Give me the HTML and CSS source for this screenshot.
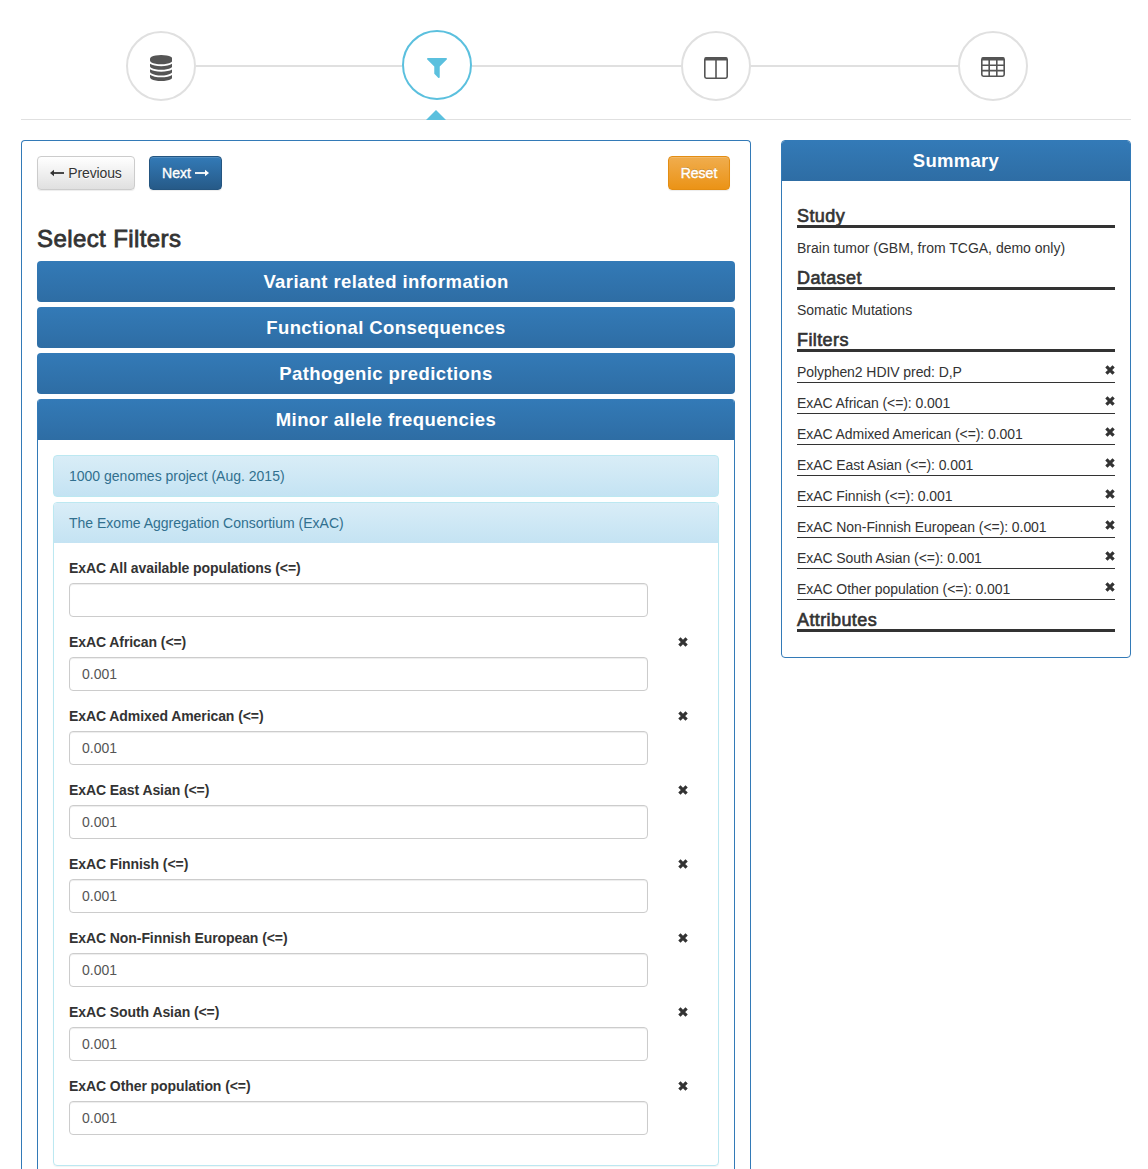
FILE: index.html
```html
<!DOCTYPE html>
<html lang="en">
<head>
<meta charset="utf-8">
<title>Select Filters</title>
<link rel="stylesheet" href="styles.css">
</head>
<body>
<svg width="0" height="0" class="defs" aria-hidden="true">
  <symbol id="remove" viewBox="0 0 10 10"><path d="M1.4 1.4L8.6 8.6M8.6 1.4L1.4 8.6" stroke="#333" stroke-width="3.2"/></symbol>
</svg>
<nav class="steps">
  <span class="step"><svg width="22.3" height="26" viewBox="0 0 1536 1792" fill="#555"><path d="M768 768q237 0 443-43t325-127v170q0 69-103 128t-280 93.5-385 34.5-385-34.5-280-93.5-103-128v-170q119 84 325 127t443 43zm0 768q237 0 443-43t325-127v170q0 69-103 128t-280 93.5-385 34.5-385-34.5-280-93.5-103-128v-170q119 84 325 127t443 43zm0-384q237 0 443-43t325-127v170q0 69-103 128t-280 93.5-385 34.5-385-34.5-280-93.5-103-128v-170q119 84 325 127t443 43zm0-1152q208 0 385 34.5t280 93.5 103 128v128q0 69-103 128t-280 93.5-385 34.5-385-34.5-280-93.5-103-128v-128q0-69 103-128t280-93.5 385-34.5z"/></svg></span>
  <span class="line line-first"></span>
  <span class="step active"><svg width="20" height="20" viewBox="192 256 1408 1408" fill="#5bc0de"><path d="M1595 295q17 41-14 70l-493 493v742q0 42-39 59-13 5-25 5-27 0-45-19l-256-256q-19-19-19-45v-486l-493-493q-31-29-14-70 17-39 59-39h1280q42 0 59 39z"/></svg></span>
  <span class="line line-second"></span>
  <span class="step"><svg width="24" height="22" viewBox="0 0 24 22" fill="none" stroke="#555"><rect x=".8" y=".8" width="22.4" height="20.4" rx="1.6" stroke-width="1.6"/><path d="M1 2H23" stroke-width="3"/><path d="M12 2V21" stroke-width="1.6"/></svg></span>
  <span class="line line-third"></span>
  <span class="step table-step"><svg width="24" height="20" viewBox="0 0 24 20" fill="none" stroke="#555"><rect x=".8" y=".8" width="22.4" height="18.4" rx="1.6" stroke-width="1.6"/><path d="M1 2H23" stroke-width="3"/><path d="M8.2 2V19M15.8 2V19M1 8.2H23M1 13.6H23" stroke-width="1.6"/></svg></span>
  <span class="pointer"></span>
</nav>
<div class="columns">
<main class="panel wizard">
  <div class="toolbar">
    <button class="btn btn-default"><svg width="14" height="8" viewBox="0 0 14 8"><path d="M2 4H14" stroke="#333" stroke-width="1.8"/><path d="M0 4L4 .8V7.2Z" fill="#333"/></svg>Previous</button>
    <button class="btn btn-primary">Next<svg width="14" height="8" viewBox="0 0 14 8"><path d="M0 4H12" stroke="#fff" stroke-width="1.8"/><path d="M14 4L10 .8V7.2Z" fill="#fff"/></svg></button>
    <button class="btn btn-warning">Reset</button>
  </div>
  <h3 class="title">Select Filters</h3>
  <div class="groups">
    <div class="bar closed">Variant related information</div>
    <div class="bar closed">Functional Consequences</div>
    <div class="bar closed">Pathogenic predictions</div>
    <section class="open-group">
      <div class="bar">Minor allele frequencies</div>
      <div class="group-body">
        <div class="info closed-info">1000 genomes project (Aug. 2015)</div>
        <section class="open-info">
          <div class="info">The Exome Aggregation Consortium (ExAC)</div>
          <div class="fields">
            <div class="field"><label>ExAC All available populations (&lt;=)</label><div class="input"></div></div>
            <div class="field"><label>ExAC African (&lt;=)<svg class="x"><use href="#remove"/></svg></label><div class="input">0.001</div></div>
            <div class="field"><label>ExAC Admixed American (&lt;=)<svg class="x"><use href="#remove"/></svg></label><div class="input">0.001</div></div>
            <div class="field"><label>ExAC East Asian (&lt;=)<svg class="x"><use href="#remove"/></svg></label><div class="input">0.001</div></div>
            <div class="field"><label>ExAC Finnish (&lt;=)<svg class="x"><use href="#remove"/></svg></label><div class="input">0.001</div></div>
            <div class="field"><label>ExAC Non-Finnish European (&lt;=)<svg class="x"><use href="#remove"/></svg></label><div class="input">0.001</div></div>
            <div class="field"><label>ExAC South Asian (&lt;=)<svg class="x"><use href="#remove"/></svg></label><div class="input">0.001</div></div>
            <div class="field"><label>ExAC Other population (&lt;=)<svg class="x"><use href="#remove"/></svg></label><div class="input">0.001</div></div>
          </div>
        </section>
      </div>
    </section>
  </div>
</main>
<aside class="panel summary">
  <div class="bar summary-bar">Summary</div>
  <div class="summary-body">
    <h4>Study</h4>
    <p>Brain tumor (GBM, from TCGA, demo only)</p>
    <h4>Dataset</h4>
    <p>Somatic Mutations</p>
    <h4>Filters</h4>
    <div class="chosen"><span>Polyphen2 HDIV pred: D,P</span><svg class="x"><use href="#remove"/></svg></div>
    <div class="chosen"><span>ExAC African (&lt;=): 0.001</span><svg class="x"><use href="#remove"/></svg></div>
    <div class="chosen"><span>ExAC Admixed American (&lt;=): 0.001</span><svg class="x"><use href="#remove"/></svg></div>
    <div class="chosen"><span>ExAC East Asian (&lt;=): 0.001</span><svg class="x"><use href="#remove"/></svg></div>
    <div class="chosen"><span>ExAC Finnish (&lt;=): 0.001</span><svg class="x"><use href="#remove"/></svg></div>
    <div class="chosen"><span>ExAC Non-Finnish European (&lt;=): 0.001</span><svg class="x"><use href="#remove"/></svg></div>
    <div class="chosen"><span>ExAC South Asian (&lt;=): 0.001</span><svg class="x"><use href="#remove"/></svg></div>
    <div class="chosen"><span>ExAC Other population (&lt;=): 0.001</span><svg class="x"><use href="#remove"/></svg></div>
    <h4>Attributes</h4>
  </div>
</aside>
</div>
</body>
</html>
```
FILE: styles.css
```css
* { box-sizing: border-box; }
body {
  margin: 0;
  padding: 0 17px 0 21px;
  background: #fff;
  color: #333;
  font: 14px/20px "Liberation Sans", Arial, sans-serif;
}
.defs { position: absolute; }

/* Wizard steps */
.steps {
  position: relative;
  display: flex;
  align-items: flex-start;
  height: 120px;
  padding: 31px 0 0 105px;
  border-bottom: 1px solid #e0e0e0;
}
.step {
  flex: none;
  display: flex;
  align-items: center;
  justify-content: center;
  width: 70px;
  height: 70px;
  padding-top: 4px;
  border: 2px solid #e0e0e0;
  border-radius: 50%;
}
.step.active { margin-top: -1px; padding: 6px 0 0; border-color: #5bc0de; }
.table-step { padding-top: 2px; }
.line { flex: none; height: 2px; margin-top: 34px; background: #e0e0e0; }
.line-first { width: 206px; }
.line-second { width: 209px; }
.line-third { width: 207px; }
.pointer {
  position: absolute;
  left: 405px;
  bottom: -1px;
  border: 10px solid transparent;
  border-top: 0;
  border-bottom-color: #5bc0de;
}

/* Panels */
.columns { display: flex; align-items: flex-start; justify-content: space-between; padding-top: 20px; }
.panel { border: 1px solid #337ab7; border-radius: 4px; }
.wizard { width: 730px; height: 1029px; padding: 15px 15px 0; border-bottom: 0; border-radius: 4px 4px 0 0; }
.bar {
  height: 41px;
  padding-top: 1px;
  background: linear-gradient(#337ab7, #2e6da4);
  color: #fff;
  font-size: 18.5px;
  font-weight: bold;
  line-height: 40px;
  letter-spacing: .4px;
  text-align: center;
}
.toolbar { display: flex; gap: 14px; padding-right: 5px; }
.btn {
  display: flex;
  align-items: center;
  justify-content: center;
  gap: 4px;
  height: 34px;
  padding: 0;
  border: 1px solid;
  border-radius: 4px;
  box-shadow: inset 0 1px 0 rgba(255,255,255,.15), 0 1px 1px rgba(0,0,0,.075);
  font: 14px/20px "Liberation Sans", Arial, sans-serif;
}
.btn-default { width: 98px; border-color: #ccc; background: linear-gradient(#fff, #e0e0e0); color: #333; text-shadow: 0 1px 0 #fff; letter-spacing: -.15px; }
.btn-primary { width: 73px; border-color: #245580; background: linear-gradient(#337ab7, #265a88); color: #fff; text-shadow: 0 -1px 0 rgba(0,0,0,.2); -webkit-text-stroke: .4px #fff; }
.btn-warning { width: 62px; margin-left: auto; border-color: #e38d13; background: linear-gradient(#f0ad4e, #eb9316); color: #fff; text-shadow: 0 -1px 0 rgba(0,0,0,.2); -webkit-text-stroke: .4px #fff; }
.title {
  margin: 35px 0 9px;
  font-size: 24px;
  font-weight: normal;
  line-height: 27px;
  letter-spacing: .4px;
  -webkit-text-stroke: .8px #333;
}
.groups { display: flex; flex-direction: column; gap: 5px; }
.closed { border-radius: 4px; }
.open-group { overflow: hidden; height: 770px; border: 1px solid #337ab7; border-width: 0 1px; border-radius: 4px 4px 0 0; }
.group-body { padding: 15px 15px 0; }

/* Inner panels */
.info {
  height: 40px;
  padding: 0 15px;
  background: linear-gradient(#d9edf7, #c4e3f3);
  color: #31708f;
  line-height: 40px;
}
.closed-info { height: 42px; margin-bottom: 5px; border: 1px solid #bce8f1; border-radius: 4px; }
.open-info { overflow: hidden; height: 664px; border: 1px solid #bce8f1; border-radius: 4px; box-shadow: 0 1px 1px rgba(0,0,0,.05); }
.fields { padding: 15px; }
.field { height: 74px; }
.field label {
  display: flex;
  justify-content: space-between;
  align-items: center;
  width: 619px;
  height: 20px;
  margin-bottom: 5px;
  font-weight: bold;
  letter-spacing: -.08px;
}
.x { display: block; flex: none; width: 10px; height: 10px; }
.input {
  width: 579px;
  height: 34px;
  padding: 6px 12px;
  border: 1px solid #ccc;
  border-radius: 4px;
  box-shadow: inset 0 1px 1px rgba(0,0,0,.075);
  color: #555;
}

/* Summary */
.summary { width: 350px; height: 518px; overflow: hidden; }
.summary-bar { height: 40px; padding: 0; line-height: 40px; letter-spacing: .3px; }
.summary-body { padding: 15px 15px 0; }
.summary h4 {
  height: 21px;
  margin: 11px 0 10px;
  border-bottom: 3px solid #333;
  font-size: 18px;
  font-weight: normal;
  line-height: 18px;
  letter-spacing: .4px;
  -webkit-text-stroke: .65px #333;
}
.summary p { margin: 0; }
.chosen {
  display: flex;
  justify-content: space-between;
  height: 21px;
  margin-top: 10px;
  border-bottom: 1px solid #333;
  letter-spacing: -.07px;
}
.chosen .x { margin: 2.5px .5px 0 0; }
```
